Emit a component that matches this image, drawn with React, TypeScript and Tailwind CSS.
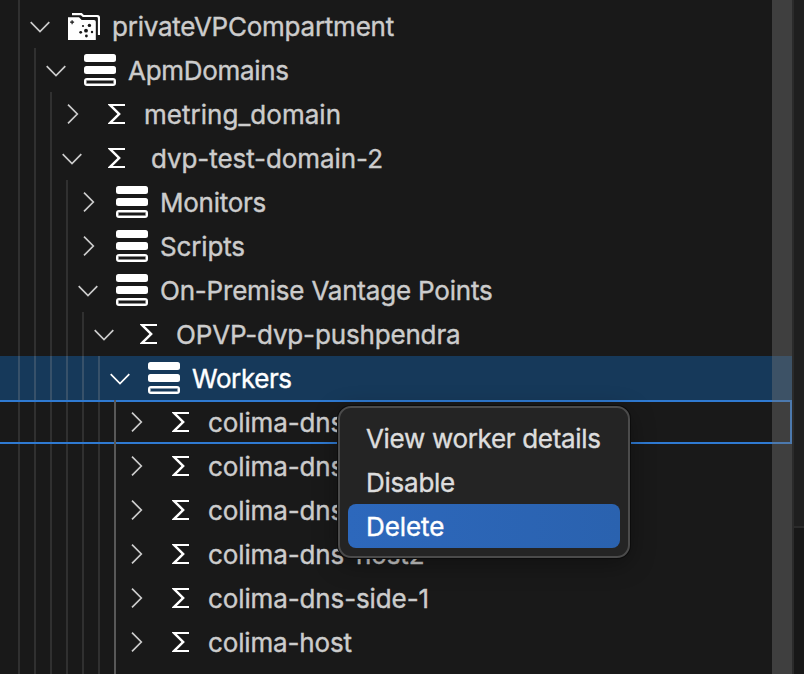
import React from "react";

type Kind = "folder" | "stack" | "sigma";
type Node = {
  label: string;
  level: number;
  kind: Kind;
  open?: boolean;
  state?: "selected" | "focused";
  text: string;
};

const nodes: Node[] = [
  { label: "privateVPCompartment", level: 0, kind: "folder", open: true, text: "tracking-[-0.24px]" },
  { label: "ApmDomains", level: 1, kind: "stack", open: true, text: "tracking-[-0.3px]" },
  { label: "metring_domain", level: 2, kind: "sigma", text: "tracking-[0.03px]" },
  { label: "dvp-test-domain-2", level: 2, kind: "sigma", open: true, text: "pl-[7px] tracking-[-0.07px]" },
  { label: "Monitors", level: 3, kind: "stack", text: "tracking-[-0.25px]" },
  { label: "Scripts", level: 3, kind: "stack", text: "tracking-[-0.15px]" },
  { label: "On-Premise Vantage Points", level: 3, kind: "stack", open: true, text: "tracking-[-0.2px]" },
  { label: "OPVP-dvp-pushpendra", level: 4, kind: "sigma", open: true, text: "tracking-[-0.16px]" },
  { label: "Workers", level: 5, kind: "stack", open: true, state: "selected", text: "tracking-[-0.4px]" },
  { label: "colima-dns", level: 6, kind: "sigma", state: "focused", text: "tracking-[-0.12px]" },
  { label: "colima-dns", level: 6, kind: "sigma", text: "tracking-[-0.12px]" },
  { label: "colima-dns", level: 6, kind: "sigma", text: "tracking-[-0.12px]" },
  { label: "colima-dns-host2", level: 6, kind: "sigma", text: "tracking-[-0.12px]" },
  { label: "colima-dns-side-1", level: 6, kind: "sigma", text: "tracking-[-0.12px]" },
  { label: "colima-host", level: 6, kind: "sigma", text: "tracking-[-0.15px]" },
];

function Chevron({ open }: { open?: boolean }) {
  return (
    <svg className="h-6 w-6 shrink-0" viewBox="0 0 24 24" fill="none" stroke="currentColor" strokeWidth="1.7">
      <path d={open ? "M2.7 8.2 12 17.5l9.3-9.3" : "M8 2.7 17.3 12 8 21.3"} />
    </svg>
  );
}

function FolderIcon() {
  return (
    <svg className="h-8 w-8 shrink-0" viewBox="0 0 32 32">
      <path d="M4 5.200V3H13.800L15.800 5H29.500Q32 5 32 7.500V25H29.900V8.500Q29.900 7.100 28.500 7.100H14.800L12.900 5.200Z" fill="#fff" />
      <path d="M0 7.300H11L13.700 10H26Q27.800 10 27.800 11.800V30H0Z" fill="#fff" />
      <g fill="#181818">
        <path d="M3.500 10.200h1.200v1.400h1.400v1.200H4.700v1.400H3.500v-1.400H2.100v-1.200h1.400z" />
        <circle cx="18" cy="20.700" r="1.900" />
        <circle cx="21.400" cy="15.400" r="1.700" />
        <circle cx="15" cy="16" r="1.100" />
        <circle cx="12.700" cy="22.300" r="1.400" />
        <circle cx="24" cy="22" r="1.200" />
        <circle cx="18.400" cy="26" r="1.400" />
      </g>
    </svg>
  );
}

function StackIcon() {
  return (
    <svg className="h-8 w-8 shrink-0" viewBox="0 0 32 32">
      <rect width="32" height="8" rx="2.500" fill="#fff" />
      <rect y="12" width="32" height="8" rx="2.500" fill="#fff" />
      <rect x="1" y="25" width="30" height="6" rx="2" fill="none" stroke="#fff" strokeWidth="2" />
      <rect x="2.500" y="26.500" width="27" height="3" fill="none" stroke="#fff" strokeOpacity="0.5" />
    </svg>
  );
}

function SigmaIcon() {
  return (
    <svg className="h-8 w-8 shrink-0" viewBox="0 0 32 32">
      <path d="M8 6H25V8H12.800L20.900 16L12.800 24H25V26H8V25.300L17.400 16L8 6.700Z" fill="#fff" />
    </svg>
  );
}

function TreeRow({ node }: { node: Node }) {
  const selected = node.state === "selected";
  const focused = node.state === "focused";
  return (
    <div
      className={
        "flex h-11 shrink-0 items-center pl-[18px] " +
        (selected ? "bg-[#16395a] text-white" : "text-[#cccccc]") +
        (focused ? " shadow-[inset_0_2px_0_#2f7ad2,inset_0_-2px_0_#2f7ad2,inset_-2px_0_0_#2f7ad2]" : "")
      }
    >
      {Array.from({ length: node.level + 1 }, (_, i) => (
        <span
          key={i}
          className={
            "shrink-0 border-l-2 " +
            (focused && i < 6 ? "h-10 " : "h-11 ") +
            (i === 6 ? "border-[#585858] " : selected ? "border-[#37516a] " : "border-[#303030] ") +
            (i === node.level ? "w-[10px]" : "w-4")
          }
        />
      ))}
      <Chevron open={node.open} />
      <span className="ml-4 mr-3">
        {node.kind === "folder" ? <FolderIcon /> : node.kind === "stack" ? <StackIcon /> : <SigmaIcon />}
      </span>
      <span className={"whitespace-pre pt-0.5 " + node.text}>{node.label}</span>
    </div>
  );
}

export default function App() {
  return (
    <div className="relative flex h-[674px] w-[804px] overflow-hidden bg-[#191919] font-['Inter',sans-serif] text-[26px] leading-[44px] [-webkit-text-stroke:0.4px]">
      <div className="flex w-[792px] shrink-0 flex-col overflow-hidden">
        <div className="h-1 shrink-0 pl-[18px]">
          <div className="h-1 border-l-2 border-[#303030]" />
        </div>
        {nodes.map((n, i) => (
          <TreeRow key={i} node={n} />
        ))}
        <div className="flex h-[10px] shrink-0 pl-[18px]">
          {[0, 1, 2, 3, 4, 5, 6].map((i) => (
            <span key={i} className={"w-4 border-l-2 " + (i === 6 ? "border-[#585858]" : "border-[#303030]")} />
          ))}
        </div>
      </div>
      <div className="flex w-3 flex-col border-l-2 border-[#2b2b2b]">
        <div className="h-[528px] border-b-2 border-[#2b2b2b] bg-[#1f1f1f]" />
        <div className="flex-1 bg-[#181818]" />
      </div>
      <div className="absolute inset-y-0 left-[772px] w-5 bg-[#797979]/40" />
      <div className="absolute left-[338px] top-[406px] flex h-[152px] w-[292px] flex-col whitespace-nowrap rounded-[13px] border-2 border-[#4b4b4b] bg-[#242424] p-2 text-[#dddddd] shadow-[0_0_0_1px_#0c0c0c,0_6px_24px_rgba(0,0,0,0.35)]">
        <div className="h-11 px-[18px] pt-px tracking-[-0.32px]">View worker details</div>
        <div className="h-11 px-[18px] pt-px tracking-[-0.25px]">Disable</div>
        <div className="h-11 rounded-lg bg-linear-to-r from-[#2d68bc] to-[#2a62af] px-[18px] pt-px tracking-[-0.1px] text-white">Delete</div>
      </div>
    </div>
  );
}
